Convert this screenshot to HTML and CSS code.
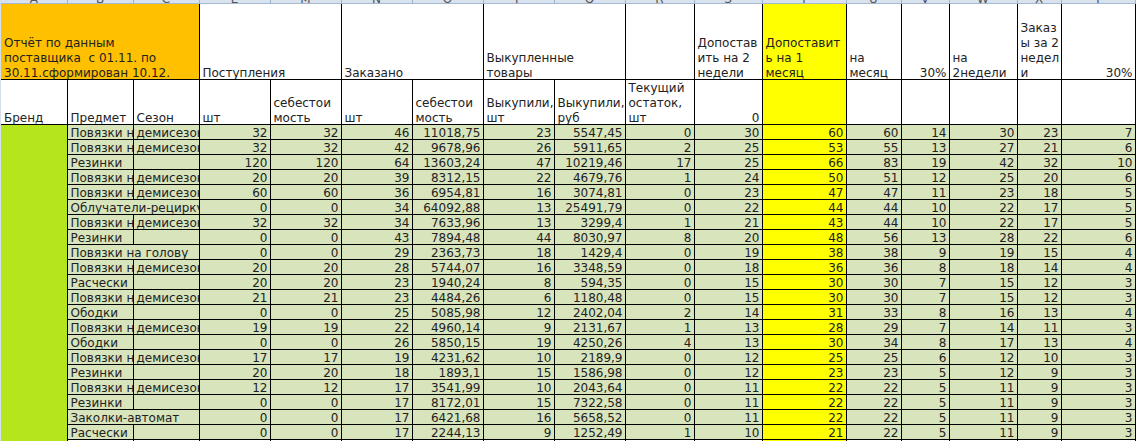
FILE: index.html
```html
<!DOCTYPE html>
<html lang="ru">
<head>
<meta charset="utf-8">
<title>Отчёт</title>
<link rel="stylesheet" href="styles.css">
</head>
<body>
<div class="sheet">
<table class="grid">
<colgroup>
<col class="c66"><col class="c66"><col class="c66"><col class="c71"><col class="c71"><col class="c71"><col class="c71"><col class="c71"><col class="c71"><col class="c69"><col class="c68"><col class="c84"><col class="c55"><col class="c48"><col class="c68"><col class="c44"><col class="c74">
</colgroup>
<thead>
<tr class="rowLetters">
<td><div>A</div></td><td><div>B</div></td><td><div>C</div></td><td><div>E</div></td><td><div>M</div></td><td><div>N</div></td><td><div>O</div></td><td><div>P</div></td><td><div>Q</div></td><td><div>R</div></td><td><div>S</div></td><td><div>T</div></td><td><div>U</div></td><td><div>V</div></td><td><div>W</div></td><td><div>X</div></td><td><div>Y</div></td>
</tr>
<tr class="rowTop">
<td colspan="3" class="orange"><div>Отчёт по данным<br>поставщика&nbsp; с 01.11. по<br>30.11.сформирован 10.12.</div></td>
<td colspan="2"><div>Поступления</div></td>
<td colspan="2"><div>Заказано</div></td>
<td colspan="2"><div>Выкупленные<br>товары</div></td>
<td></td>
<td><div>Допостав<br>ить на 2<br>недели</div></td>
<td class="yellow"><div>Допоставит<br>ь на 1<br>месяц</div></td>
<td><div>на<br>месяц</div></td>
<td class="num"><div>30%</div></td>
<td><div>на<br>2недели</div></td>
<td><div>Заказ<br>ы за 2<br>недел<br>и</div></td>
<td class="num"><div>30%</div></td>
</tr>
<tr class="rowSub">
<td><div>Бренд</div></td>
<td><div>Предмет</div></td>
<td><div>Сезон</div></td>
<td><div>шт</div></td>
<td><div>себестои<br>мость</div></td>
<td><div>шт</div></td>
<td><div>себестои<br>мость</div></td>
<td><div>Выкупили,<br>шт</div></td>
<td><div>Выкупили,<br>руб</div></td>
<td><div>Текущий<br>остаток,<br>шт</div></td>
<td class="num"><div>0</div></td>
<td class="yellow"></td>
<td></td><td></td><td></td><td></td><td></td>
</tr>
</thead>
<tbody id="rows"></tbody>
</table>
</div>
<script>
// предмет, сезон, потом числа по колонкам
var data = [
["Повязки на голову","демисезонные",32,32,46,"11018,75",23,"5547,45",0,30,60,60,14,30,23,7],
["Повязки на голову","демисезонные",32,32,42,"9678,96",26,"5911,65",2,25,53,55,13,27,21,6],
["Резинки","",120,120,64,"13603,24",47,"10219,46",17,25,66,83,19,42,32,10],
["Повязки на голову","демисезонные",20,20,39,"8312,15",22,"4679,76",1,24,50,51,12,25,20,6],
["Повязки на голову","демисезонные",60,60,36,"6954,81",16,"3074,81",0,23,47,47,11,23,18,5],
["Облучатели-рециркуляторы","",0,0,34,"64092,88",13,"25491,79",0,22,44,44,10,22,17,5],
["Повязки на голову","демисезонные",32,32,34,"7633,96",13,"3299,4",1,21,43,44,10,22,17,5],
["Резинки","",0,0,43,"7894,48",44,"8030,97",8,20,48,56,13,28,22,6],
["Повязки на голову","",0,0,29,"2363,73",18,"1429,4",0,19,38,38,9,19,15,4],
["Повязки на голову","демисезонные",20,20,28,"5744,07",16,"3348,59",0,18,36,36,8,18,14,4],
["Расчески","",20,20,23,"1940,24",8,"594,35",0,15,30,30,7,15,12,3],
["Повязки на голову","демисезонные",21,21,23,"4484,26",6,"1180,48",0,15,30,30,7,15,12,3],
["Ободки","",0,0,25,"5085,98",12,"2402,04",2,14,31,33,8,16,13,4],
["Повязки на голову","демисезонные",19,19,22,"4960,14",9,"2131,67",1,13,28,29,7,14,11,3],
["Ободки","",0,0,26,"5850,15",19,"4250,26",4,13,30,34,8,17,13,4],
["Повязки на голову","демисезонные",17,17,19,"4231,62",10,"2189,9",0,12,25,25,6,12,10,3],
["Резинки","",20,20,18,"1893,1",15,"1586,98",0,12,23,23,5,12,9,3],
["Повязки на голову","демисезонные",12,12,17,"3541,99",10,"2043,64",0,11,22,22,5,11,9,3],
["Резинки","",0,0,17,"8172,01",15,"7322,58",0,11,22,22,5,11,9,3],
["Заколки-автомат","",0,0,17,"6421,68",16,"5658,52",0,11,22,22,5,11,9,3],
["Расчески","",0,0,17,"2244,13",9,"1252,49",1,10,21,22,5,11,9,3]
];

var html = "";
for (var i = 0; i < data.length; i++) {
    var r = data[i];
    html += "<tr>";
    if (i == 0) html += '<td class="brand" rowspan="' + (data.length + 1) + '"></td>';
    // длинный текст без сезона занимает и пустую соседнюю ячейку, как в Excel
    if (r[1] == "" && r[0].length > 9) {
        html += '<td class="txt" colspan="2">' + r[0] + "</td>";
    } else {
        html += '<td class="txt">' + r[0] + "</td>";
        html += '<td class="txt">' + r[1] + "</td>";
    }
    for (var j = 2; j < r.length; j++) {
        html += '<td class="num' + (j == 10 ? " yellow" : "") + '">' + r[j] + "</td>";
    }
    html += "</tr>";
}
// следующая строка листа, видна только её верхушка
html += '<tr class="rowEnd">';
for (var k = 0; k < 16; k++) {
    html += '<td' + (k == 10 ? ' class="yellow"' : "") + "></td>";
}
html += "</tr>";
document.getElementById("rows").innerHTML = html;
</script>
</body>
</html>
```
FILE: styles.css
```css
html, body {
    margin: 0;
    padding: 0;
    background: #fff;
}

.sheet {
    width: 1136px;
    height: 441px;
    overflow: hidden;
    padding-left: 1px;
    box-sizing: border-box;
    background: #d5e0ee;
}

.grid {
    border-collapse: collapse;
    table-layout: fixed;
    width: 1134px;
    font-family: "DejaVu Sans", sans-serif;
    font-size: 12px;
    line-height: 15px;
    color: #222;
    background: #fff;
}

.c44 { width: 44px; }
.c48 { width: 48px; }
.c55 { width: 55px; }
.c66 { width: 66px; }
.c68 { width: 68px; }
.c69 { width: 69px; }
.c71 { width: 71px; }
.c74 { width: 74px; }
.c84 { width: 84px; }

.grid td {
    border: 1px solid #000;
    padding: 0 2px 0 3px;
    vertical-align: bottom;
    overflow: hidden;
    box-sizing: border-box;
}

.grid thead td {
    white-space: nowrap;
}

.grid td:first-child {
    border-left: 0;
}

/* обрезанные буквы колонок сверху */
.grid .rowLetters td {
    height: 4px;
    padding: 0;
    border: 0;
    border-right: 1px solid #9fb6d0;
    background: #d9e3f0;
    color: #555;
    text-align: center;
}

.rowLetters div {
    height: 4px;
    box-sizing: border-box;
    border-bottom: 1px solid #a6b9d0;
    overflow: hidden;
    display: flex;
    justify-content: center;
    align-items: flex-end;
    line-height: 8px;
}

.rowTop td {
    height: 75px;
    border-top: 0;
}

.rowTop div, .rowSub div {
    margin-bottom: -2px;
}

.rowSub td {
    height: 45px;
}

.grid tbody td {
    height: 15px;
    padding-top: 2px;
    line-height: 12px;
    background: #d8e4bc;
    white-space: nowrap;
}

.grid tbody .rowEnd td {
    background: #fff;
}

.grid tbody td.yellow, .grid tbody .rowEnd td.yellow, .yellow {
    background: #ffff00;
}

.grid td.orange {
    background: #ffc000;
}

.grid tbody td.brand {
    background: #b5e61d;
}

.num {
    text-align: right;
}
```
